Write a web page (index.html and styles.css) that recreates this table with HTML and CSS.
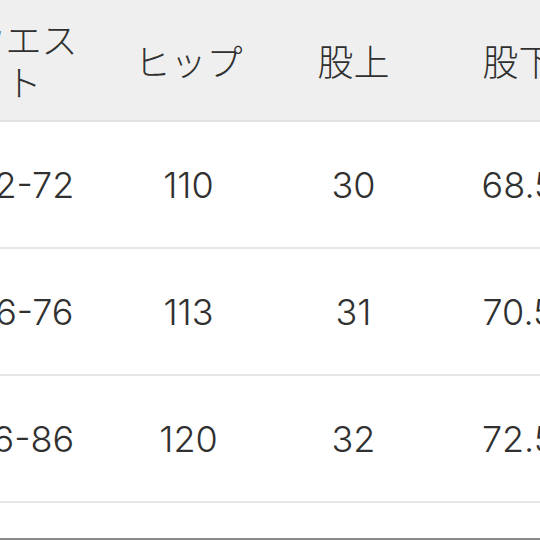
FILE: index.html
```html
<!DOCTYPE html>
<html lang="ja">
<head>
<meta charset="utf-8">
<link rel="stylesheet" href="styles.css">
</head>
<body>
<div class="frame">
  <table class="size-table">
    <thead>
      <tr>
        <th>ウエス<br>ト</th>
        <th>ヒップ</th>
        <th>股上</th>
        <th>股下</th>
      </tr>
    </thead>
    <tbody>
      <tr><td>62-72</td><td>110</td><td>30</td><td>68.5</td></tr>
      <tr><td>66-76</td><td>113</td><td>31</td><td>70.5</td></tr>
      <tr><td>76-86</td><td>120</td><td>32</td><td>72.5</td></tr>
    </tbody>
  </table>
  <div class="tail"></div>
</div>
</body>
</html>
```

FILE: styles.css
```css
html, body {
  margin: 0;
  padding: 0;
  background: #ffffff;
}
body {
  width: 540px;
  height: 540px;
  overflow: hidden;
}
.frame {
  width: 540px;
  height: 540px;
  overflow: hidden;
  display: flex;
  flex-direction: column;
}
.size-table {
  margin-left: -59px;
  width: 660px;
  flex: none;
  border-collapse: collapse;
  table-layout: fixed;
  font-family: Inter, "Noto Sans CJK JP", sans-serif;
  color: #303030;
}
.size-table th,
.size-table td {
  width: 165px;
  padding: 0;
  text-align: center;
  vertical-align: middle;
}
.size-table th {
  height: 120px;
  background: #efefef;
  border-bottom: 2px solid #e2e2e2;
  font-family: "Noto Sans CJK JP", sans-serif;
  font-weight: 300;
  font-size: 36px;
  line-height: 43px;
}
.size-table td {
  height: 125px;
  border-bottom: 2px solid #e6e6e6;
  font-size: 36px;
  line-height: 44px;
  font-weight: 300;
}
.tail {
  flex: 1;
  border-bottom: 2px solid #8a8a8a;
}
```
